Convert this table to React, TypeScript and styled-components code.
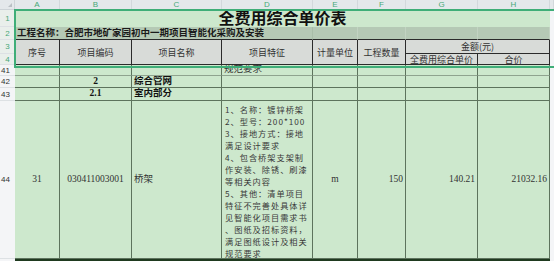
import React from "react";
import styled, { createGlobalStyle } from "styled-components";

const GlobalStyle = createGlobalStyle`
  html, body {
    margin: 0;
    padding: 0;
    background: #ffffff;
  }
  body {
    font-family: "Noto Sans CJK SC", "Liberation Sans", sans-serif;
    overflow: hidden;
  }
`;

const GREEN = "#cde8cd";
const ROW2 = "#b5c9b5";
const HEAD = "#d8dbd8";
const DARK = "#2b2b2b";
const GRID = "#5d735d";

const Sheet = styled.div`
  position: relative;
  display: grid;
  width: 554px;
  height: 261px;
  grid-template-columns: 15px 45px 72px 90px 91px 45px 48px 72px 72px 4px;
  grid-template-rows: 10px 17px 13px 14px 11px 11px 12px 13px 158px 2px;
  background: #f4f5f7;
  overflow: hidden;
`;

const ColLetter = styled.div<{ $active?: boolean }>`
  background: #e4e8eb;
  border-right: 1px solid #d3d8dc;
  border-bottom: 1px solid #cdd3d7;
  box-sizing: border-box;
  color: ${(p) => (p.$active ? "#47a878" : "#8a9096")};
  font: 8px "Liberation Sans", sans-serif;
  line-height: 9px;
  text-align: center;
`;

const Corner = styled.div`
  background: #e4e8eb;
  border-right: 1px solid #cdd3d7;
  border-bottom: 1px solid #cdd3d7;
  box-sizing: border-box;
  position: relative;
  &::after {
    content: "";
    position: absolute;
    right: 2px;
    bottom: 2px;
    border-left: 4px solid transparent;
    border-bottom: 4px solid #b9bfc4;
  }
`;

const RowNum = styled.div<{ $row: string; $active?: boolean }>`
  grid-column: 1;
  grid-row: ${(p) => p.$row};
  display: flex;
  align-items: center;
  justify-content: ${(p) => (p.$active ? "center" : "flex-start")};
  padding-left: ${(p) => (p.$active ? "0" : "1px")};
  background: ${(p) => (p.$active ? "#e9efeb" : "#f4f5f7")};
  border-bottom: 1px solid #dde1e4;
  box-sizing: border-box;
  color: ${(p) => (p.$active ? "#47a878" : "#333")};
  font: 8px "Liberation Sans", sans-serif;
`;

const Cell = styled.div<{
  $col: string;
  $row: string;
  $bg?: string;
  $line?: string;
  $bottom?: string;
  $align?: "left" | "center" | "right";
  $bold?: boolean;
  $head?: boolean;
}>`
  grid-column: ${(p) => p.$col};
  grid-row: ${(p) => p.$row};
  display: flex;
  align-items: center;
  justify-content: ${(p) =>
    p.$align === "left" ? "flex-start" : p.$align === "right" ? "flex-end" : "center"};
  padding: 0 2px;
  box-sizing: border-box;
  background: ${(p) => p.$bg || GREEN};
  border-right: 1px solid ${(p) => p.$line || GRID};
  border-bottom: 1px solid ${(p) => p.$bottom || p.$line || GRID};
  color: ${(p) => (p.$bold ? "#111" : "#333")};
  font-family: ${(p) =>
    p.$head
      ? `"Noto Sans CJK SC", "Liberation Sans", sans-serif`
      : `"Liberation Serif", "Noto Sans CJK SC", serif`};
  font-size: ${(p) => (p.$head ? "9px" : "9.5px")};
  font-weight: ${(p) => (p.$bold ? 700 : 400)};
  white-space: nowrap;
  overflow: hidden;
  line-height: 1;
`;

const Title = styled(Cell)`
  font-family: "Liberation Serif", "Noto Sans CJK SC", serif;
  font-size: 16px;
  font-weight: 700;
  color: #111;
  border-right: none;
  border-bottom: none;
`;

const ProjectName = styled(Cell)`
  font-family: "Noto Sans CJK SC", "Liberation Sans", sans-serif;
  font-size: 9.5px;
  font-weight: 700;
  color: #1a1a1a;
  padding-left: 2px;
  overflow: visible;
`;

const Feature = styled(Cell)`
  flex-direction: column;
  align-items: flex-start;
  justify-content: flex-start;
  padding: 2px 0 0 3px;
  font-family: "Noto Sans CJK SC", serif;
  font-size: 8.2px;
  letter-spacing: 1px;
  line-height: 12px;
  color: #3a3a3a;
`;

const FeatureLine = styled.span`
  display: block;
  height: 12px;
`;

const Edge = styled.div<{ $row: string }>`
  grid-column: 10;
  grid-row: ${(p) => p.$row};
  background: #f4f5f7;
`;

const BottomLine = styled.div`
  grid-column: 2 / 10;
  grid-row: 10;
  background: #1f3a1f;
`;

const Selection = styled.div`
  position: absolute;
  left: 14px;
  top: 9px;
  width: 538px;
  height: 55px;
  border: 2px solid #3fae78;
  pointer-events: none;
`;

const featureLines = [
  "1、名称：镀锌桥架",
  "2、型号：200*100",
  "3、接地方式：接地",
  "满足设计要求",
  "4、包含桥架支架制",
  "作安装、除锈、刷漆",
  "等相关内容",
  "5、其他：清单项目",
  "特征不完善处具体详",
  "见智能化项目需求书",
  "、图纸及招标资料，",
  "满足图纸设计及相关",
  "规范要求",
];

const letters = ["A", "B", "C", "D", "E", "F", "G", "H"];

const App: React.FC = () => {
  return (
    <>
      <GlobalStyle />
      <Sheet>
        <Corner />
        {letters.map((l) => (
          <ColLetter key={l} $active>
            {l}
          </ColLetter>
        ))}
        <ColLetter />

        {/* row 1 - title */}
        <RowNum $row="2" $active>1</RowNum>
        <Title $col="2 / 10" $row="2">全费用综合单价表</Title>
        <Edge $row="2" />

        {/* row 2 - project name */}
        <RowNum $row="3" $active>2</RowNum>
        <ProjectName $col="2 / 6" $row="3" $bg={ROW2} $line="#a9bea9" $bottom={DARK} $align="left">
          工程名称：合肥市地矿家园初中一期项目智能化采购及安装
        </ProjectName>
        <Cell $col="6" $row="3" $bg={ROW2} $line="#c2d3c2" $bottom={DARK} />
        <Cell $col="7" $row="3" $bg={ROW2} $line="#c2d3c2" $bottom={DARK} />
        <Cell $col="8" $row="3" $bg={ROW2} $line="#c2d3c2" $bottom={DARK} />
        <Cell $col="9" $row="3" $bg={ROW2} $line="#c2d3c2" $bottom={DARK} />
        <Edge $row="3" />

        {/* rows 3-4 - table header */}
        <RowNum $row="4" $active>3</RowNum>
        <RowNum $row="5" $active>4</RowNum>
        <Cell $col="2" $row="4 / 6" $bg={HEAD} $line={DARK} $head>序号</Cell>
        <Cell $col="3" $row="4 / 6" $bg={HEAD} $line={DARK} $head>项目编码</Cell>
        <Cell $col="4" $row="4 / 6" $bg={HEAD} $line={DARK} $head>项目名称</Cell>
        <Cell $col="5" $row="4 / 6" $bg={HEAD} $line={DARK} $head>项目特征</Cell>
        <Cell $col="6" $row="4 / 6" $bg={HEAD} $line={DARK} $head>计量单位</Cell>
        <Cell $col="7" $row="4 / 6" $bg={HEAD} $line={DARK} $head>工程数量</Cell>
        <Cell $col="8 / 10" $row="4" $bg={HEAD} $line={DARK} $head>金额(元)</Cell>
        <Cell $col="8" $row="5" $bg={HEAD} $line={DARK} $head>全费用综合单价</Cell>
        <Cell $col="9" $row="5" $bg={HEAD} $line={DARK} $head>合价</Cell>
        <Edge $row="4 / 6" />

        {/* row 41 */}
        <RowNum $row="6">41</RowNum>
        <Cell $col="2" $row="6" $bottom="#8fa38f" />
        <Cell $col="3" $row="6" $bottom="#8fa38f" />
        <Cell $col="4" $row="6" $bottom="#8fa38f" />
        <Cell $col="5" $row="6" $bottom="#8fa38f" $align="left">
          规范要求
        </Cell>
        <Cell $col="6" $row="6" $bottom="#8fa38f" />
        <Cell $col="7" $row="6" $bottom="#8fa38f" />
        <Cell $col="8" $row="6" $bottom="#8fa38f" />
        <Cell $col="9" $row="6" $bottom="#8fa38f" />
        <Edge $row="6" />

        {/* row 42 */}
        <RowNum $row="7">42</RowNum>
        <Cell $col="2" $row="7" />
        <Cell $col="3" $row="7" $bold>2</Cell>
        <Cell $col="4" $row="7" $bold $align="left">综合管网</Cell>
        <Cell $col="5" $row="7" />
        <Cell $col="6" $row="7" />
        <Cell $col="7" $row="7" />
        <Cell $col="8" $row="7" />
        <Cell $col="9" $row="7" />
        <Edge $row="7" />

        {/* row 43 */}
        <RowNum $row="8">43</RowNum>
        <Cell $col="2" $row="8" />
        <Cell $col="3" $row="8" $bold>2.1</Cell>
        <Cell $col="4" $row="8" $bold $align="left">室内部分</Cell>
        <Cell $col="5" $row="8" />
        <Cell $col="6" $row="8" />
        <Cell $col="7" $row="8" />
        <Cell $col="8" $row="8" />
        <Cell $col="9" $row="8" />
        <Edge $row="8" />

        {/* row 44 */}
        <RowNum $row="9">44</RowNum>
        <Cell $col="2" $row="9">31</Cell>
        <Cell $col="3" $row="9">030411003001</Cell>
        <Cell $col="4" $row="9" $align="left">桥架</Cell>
        <Feature $col="5" $row="9">
          {featureLines.map((line) => (
            <FeatureLine key={line}>{line}</FeatureLine>
          ))}
        </Feature>
        <Cell $col="6" $row="9">m</Cell>
        <Cell $col="7" $row="9" $align="right">150</Cell>
        <Cell $col="8" $row="9" $align="right">140.21</Cell>
        <Cell $col="9" $row="9" $align="right">21032.16</Cell>
        <Edge $row="9" />

        <BottomLine />
        <Selection />
      </Sheet>
    </>
  );
};

export default App;
